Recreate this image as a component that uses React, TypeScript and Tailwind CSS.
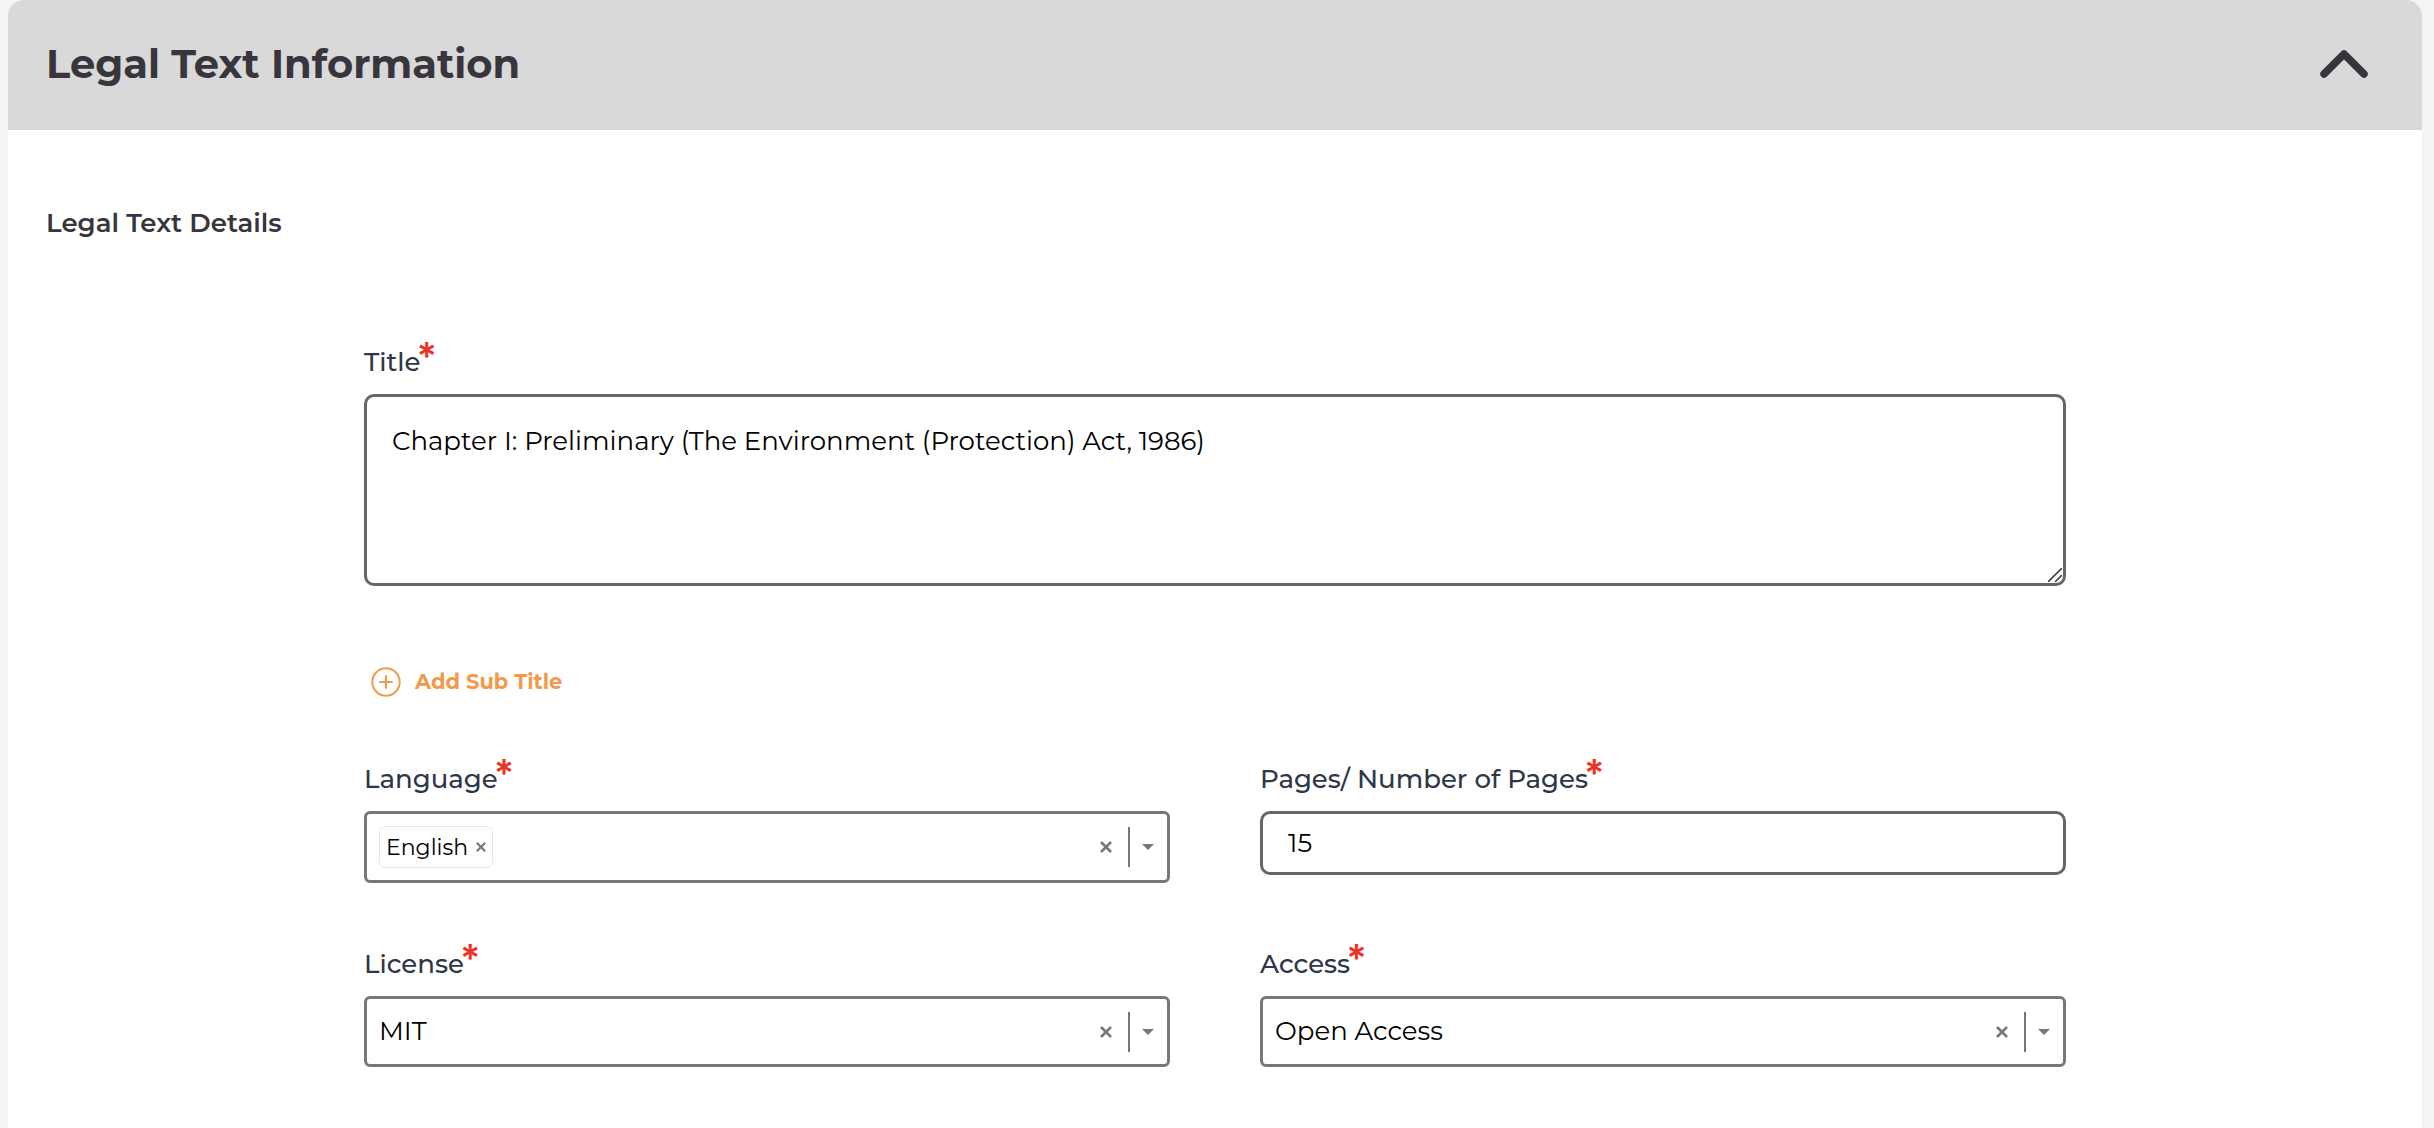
import { useState, type ReactNode } from "react";

function Label({ htmlFor, children }: { htmlFor: string; children: ReactNode }) {
  return (
    <label htmlFor={htmlFor} className="flex h-10 items-end text-[26px] leading-8 font-medium text-[#2d3748]">
      {children}
      <span className="-ml-1 self-start font-['Inter'] text-[38px] leading-9 font-semibold text-[#ed3223]">*</span>
    </label>
  );
}

function Cross({ className }: { className: string }) {
  return (
    <svg viewBox="0 0 12 12" className={className} fill="none" stroke="currentColor" strokeWidth="2.6" aria-hidden="true">
      <path d="M1 1l10 10M11 1L1 11" />
    </svg>
  );
}

function Indicators({ name, onClear }: { name: string; onClear: () => void }) {
  return (
    <div className="flex h-full shrink-0 items-center text-[#777]">
      <button type="button" aria-label={`Clear ${name}`} onClick={onClear} className="flex w-6 items-center justify-center">
        <Cross className="size-3" />
      </button>
      <span className="ml-2.5 h-10 w-0.5 bg-[#777]" />
      <button type="button" aria-label={`Open ${name}`} className="flex w-[37px] items-center justify-center pr-0.5">
        <svg viewBox="0 0 12 6" className="h-1.5 w-3" fill="currentColor" aria-hidden="true">
          <path d="M0 0h12L6 6z" />
        </svg>
      </button>
    </div>
  );
}

function SelectField({ id, label, options }: { id: string; label: string; options: string[] }) {
  const [value, setValue] = useState(options[0]);
  return (
    <div>
      <Label htmlFor={id}>{label}</Label>
      <div className="mt-4 flex h-[71px] items-center rounded-md border-3 border-[#777] bg-white">
        <select
          id={id}
          value={value}
          onChange={(e) => setValue(e.target.value)}
          className="h-full min-w-0 flex-1 appearance-none bg-transparent pl-3 text-[26px] text-black outline-none"
        >
          <option value="" />
          {options.map((o) => (
            <option key={o} value={o}>
              {o}
            </option>
          ))}
        </select>
        <Indicators name={label} onClear={() => setValue("")} />
      </div>
    </div>
  );
}

function LanguageField() {
  const [tags, setTags] = useState(["English"]);
  return (
    <div>
      <Label htmlFor="language">Language</Label>
      <div className="mt-4 flex h-[72px] items-center rounded-md border-3 border-[#777] bg-white pl-3">
        {tags.map((tag) => (
          <span key={tag} className="flex h-[42px] items-center gap-2 rounded-md border border-[#e2e8f0] px-1.5 text-[22px] text-black">
            {tag}
            <button type="button" aria-label={`Remove ${tag}`} onClick={() => setTags(tags.filter((t) => t !== tag))} className="text-[#777]">
              <Cross className="size-2.5" />
            </button>
          </span>
        ))}
        <input id="language" type="text" className="h-full min-w-0 flex-1 bg-transparent px-2 text-[22px] outline-none" />
        <Indicators name="Language" onClear={() => setTags([])} />
      </div>
    </div>
  );
}

export default function App() {
  const [open, setOpen] = useState(true);
  return (
    <div className="min-h-screen bg-[#f4f4f4] pr-3 pl-2 font-['Montserrat','Inter',sans-serif]">
      <section className="min-h-screen overflow-hidden rounded-t-2xl bg-white">
        <header className="flex h-[130px] items-center justify-between bg-[#d9d9d9] pr-[54px] pb-0.5 pl-[38px] text-[#38353d]">
          <h1 className="text-[40px] leading-12 font-bold">Legal Text Information</h1>
          <button type="button" aria-label="Toggle section" aria-expanded={open} onClick={() => setOpen(!open)}>
            <svg viewBox="0 0 48 28" className="h-7 w-12" fill="none" stroke="currentColor" strokeWidth="7.5" strokeLinecap="round" strokeLinejoin="round" aria-hidden="true">
              <path d="M4 24L24 4l20 20" />
            </svg>
          </button>
        </header>
        {open && (
          <form className="px-[38px] pt-[77px] pb-14" onSubmit={(e) => e.preventDefault()}>
            <h2 className="text-[26px] leading-8 font-semibold text-[#38353d]">Legal Text Details</h2>
            <div className="mx-auto mt-[99px] max-w-[1702px]">
              <Label htmlFor="title">Title</Label>
              <div className="relative mt-4 flex">
                <textarea
                  id="title"
                  defaultValue="Chapter I: Preliminary (The Environment (Protection) Act, 1986)"
                  className="h-48 w-full resize-none rounded-[10px] border-3 border-[#666] bg-white px-[25px] py-7 text-[26px] leading-8 text-black outline-none"
                />
                <svg viewBox="0 0 14 14" className="pointer-events-none absolute right-1 bottom-1 size-3.5" fill="none" stroke="#444" strokeWidth="1.6" aria-hidden="true">
                  <path d="M0 14L14 0M7 14l7-7" />
                </svg>
              </div>
              <button type="button" className="mt-20 ml-[7px] flex h-8 items-center gap-3.5 text-[21px] font-bold text-[#f2994a]">
                <svg viewBox="0 0 30 30" className="size-[30px]" fill="none" stroke="currentColor" strokeWidth="2" strokeLinecap="round" aria-hidden="true">
                  <circle cx="15" cy="15" r="13.7" />
                  <path d="M15 9v12M9 15h12" />
                </svg>
                Add Sub Title
              </button>
              <div className="mt-[57px] grid grid-cols-2 gap-x-[90px] gap-y-[57px]">
                <LanguageField />
                <div>
                  <Label htmlFor="pages">Pages/ Number of Pages</Label>
                  <input
                    id="pages"
                    type="text"
                    defaultValue="15"
                    className="mt-4 h-16 w-full rounded-[10px] border-3 border-[#666] bg-white px-[25px] text-[26px] text-black outline-none"
                  />
                </div>
                <SelectField id="license" label="License" options={["MIT"]} />
                <SelectField id="access" label="Access" options={["Open Access"]} />
              </div>
            </div>
          </form>
        )}
      </section>
    </div>
  );
}
